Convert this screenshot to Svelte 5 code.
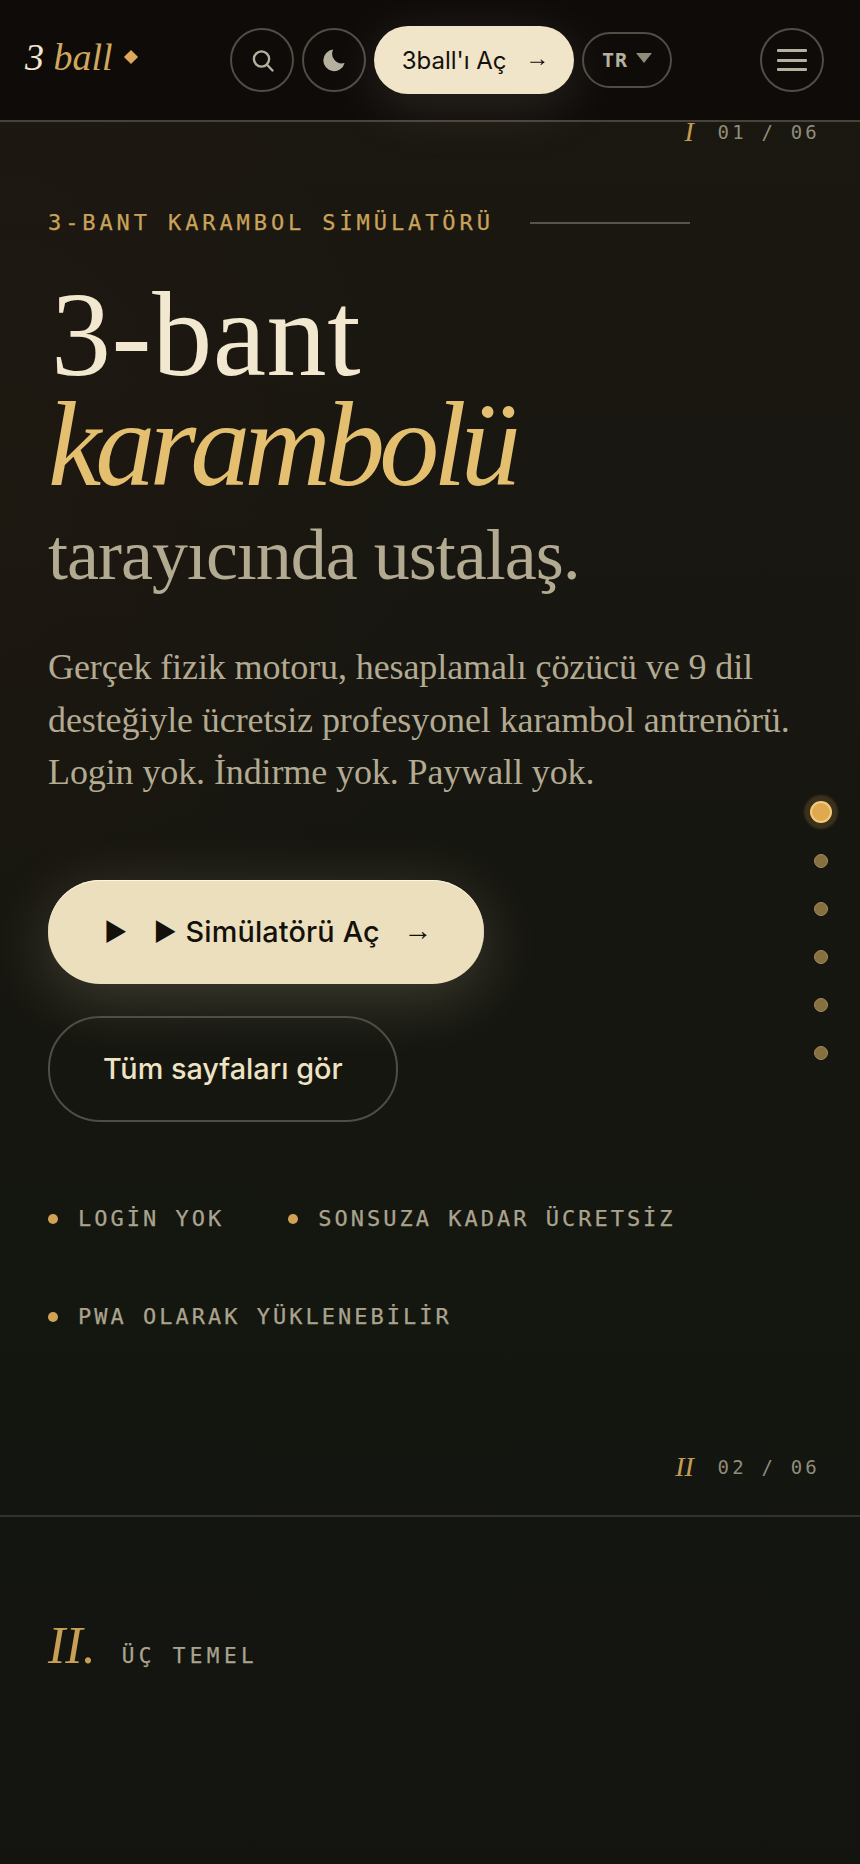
<script>
  const dots = [0, 1, 2, 3, 4, 5];
  const trust = ['LOGİN YOK', 'SONSUZA KADAR ÜCRETSİZ', 'PWA OLARAK YÜKLENEBİLİR'];
</script>

<div class="page">
  <header class="topbar">
    <a class="logo" href="#top"><span class="logo-num">3</span> ball<i class="diamond"></i></a>
    <div class="tools">
      <button class="round" aria-label="Ara">
        <svg width="24" height="24" viewBox="0 0 24 24" fill="none" stroke="currentColor" stroke-width="2.4">
          <circle cx="11.5" cy="11" r="7.6" />
          <path d="M16.8 16.5 22.5 22.5" stroke-linecap="round" />
        </svg>
      </button>
      <button class="round" aria-label="Tema">
        <svg width="24" height="24" viewBox="0 0 24 24" fill="currentColor">
          <path d="M11.2 1.6A10.8 10.8 0 1 0 22.6 15 9.6 9.6 0 0 1 11.2 1.6Z" />
        </svg>
      </button>
      <a class="open" href="#open">3ball'ı Aç <span class="arrow">→</span></a>
      <button class="lang">TR
        <svg width="16" height="10" viewBox="0 0 16 10" fill="currentColor"><path d="M0 0h16L8 10Z" /></svg>
      </button>
    </div>
    <button class="round menu" aria-label="Menü">
      <span></span><span></span><span></span>
    </button>
  </header>

  <nav class="rail">
    {#each dots as d}
      <span class="dot" class:active={d === 0}></span>
    {/each}
  </nav>

  <section class="hero">
    <div class="mark top"><em>I</em> 01 / 06</div>
    <div class="eyebrow"><span>3-BANT KARAMBOL SİMÜLATÖRÜ</span><i></i></div>
    <h1>
      <span class="l1">3-bant</span>
      <span class="l2">karambolü</span>
      <span class="l3">tarayıcında ustalaş.</span>
    </h1>
    <p class="lead">Gerçek fizik motoru, hesaplamalı çözücü ve 9 dil desteğiyle ücretsiz profesyonel karambol antrenörü. Login yok. İndirme yok. Paywall yok.</p>
    <div class="actions">
      <a class="btn primary" href="#sim"><span class="tri">▶</span><span class="tri">▶</span> Simülatörü Aç <span class="arrow">→</span></a>
      <a class="btn ghost" href="#all">Tüm sayfaları gör</a>
    </div>
    <ul class="trust">
      {#each trust as item}
        <li>{item}</li>
      {/each}
    </ul>
    <div class="mark"><em>II</em> 02 / 06</div>
  </section>

  <section class="next">
    <span class="num">II.</span>
    <span class="kicker">ÜÇ TEMEL</span>
  </section>
</div>

<style>
  :global(body) {
    background: #14150f;
  }

  .page {
    position: relative;
    width: 860px;
    height: 1864px;
    overflow: hidden;
    color: #efe3c4;
    font-family: Inter, sans-serif;
    background:
      radial-gradient(420px 620px at 0 520px, rgba(56, 30, 14, 0.14), transparent 100%),
      linear-gradient(180deg, #1b1711 0, #1a1711 320px, #161610 900px, #141610 1300px, #131410 1864px);
  }

  a {
    text-decoration: none;
  }

  button {
    background: none;
    font: inherit;
    cursor: pointer;
  }

  .arrow {
    font-family: "Liberation Sans", sans-serif;
    font-weight: 400;
    margin-bottom: 4px;
  }

  .topbar {
    height: 120px;
    display: flex;
    align-items: center;
    padding: 0 36px 0 25px;
    background: #0f0b09;
    border-bottom: 2px solid #46443a;
    box-sizing: content-box;
  }

  .logo {
    width: 205px;
    font: italic 38px "Liberation Serif", serif;
    color: #d0a85e;
    display: flex;
    align-items: center;
    white-space: pre;
    margin-top: -6px;
  }

  .logo-num {
    color: #f2e8cf;
  }

  .diamond {
    width: 10px;
    height: 10px;
    margin-left: 13px;
    background: #dca95a;
    transform: rotate(45deg);
  }

  .tools {
    display: flex;
    align-items: center;
    gap: 8px;
    flex: 1;
  }

  .round {
    width: 64px;
    height: 64px;
    border-radius: 50%;
    border: 2px solid #4f4d44;
    color: #b6b09e;
    display: flex;
    align-items: center;
    justify-content: center;
    padding: 0;
    flex: none;
  }

  .menu {
    flex-direction: column;
    gap: 6.5px;
  }

  .menu span {
    width: 30px;
    height: 3px;
    background: #b6b09e;
    border-radius: 1px;
  }

  .open {
    width: 200px;
    height: 68px;
    padding-left: 3px;
    box-sizing: border-box;
    border-radius: 34px;
    background: #f0e5c8;
    color: #14100c;
    font-size: 24px;
    display: flex;
    align-items: center;
    justify-content: center;
    gap: 4px;
    white-space: pre;
    box-shadow: 0 12px 56px rgba(240, 229, 200, 0.13);
  }

  .open .arrow {
    margin-left: 8px;
  }

  .lang {
    width: 90px;
    height: 56px;
    border-radius: 28px;
    border: 2px solid #4f4d44;
    color: #b6b09e;
    font-family: "DejaVu Sans Mono", monospace;
    font-size: 20px;
    font-weight: 700;
    letter-spacing: 1px;
    display: flex;
    align-items: center;
    justify-content: center;
    gap: 8px;
    padding: 0;
  }

  .lang svg {
    color: #8f8d79;
    margin-top: -5px;
  }

  .rail {
    position: absolute;
    right: 27px;
    top: 801px;
    width: 24px;
    display: flex;
    flex-direction: column;
    align-items: center;
    gap: 34px;
  }

  .dot {
    width: 14px;
    height: 14px;
    border-radius: 50%;
    background: #86703f;
    border: 1px solid #a68c55;
    box-sizing: border-box;
  }

  .active {
    width: 22px;
    height: 22px;
    margin-bottom: -3px;
    background: #dfa950;
    border: 2px solid #f2cb7c;
    box-shadow: 0 0 2px 6px rgba(223, 169, 80, 0.18);
  }

  .hero {
    padding: 0 48px;
    height: 1393px;
    position: relative;
    border-bottom: 2px solid #33332c;
  }

  .mark {
    display: flex;
    justify-content: flex-end;
    align-items: center;
    gap: 9px;
    position: absolute;
    right: 40px;
    bottom: 32px;
    font: 19px "DejaVu Sans Mono", monospace;
    letter-spacing: 3.2px;
    color: #908c79;
    white-space: pre;
  }

  .mark.top {
    top: -6px;
    bottom: auto;
  }

  .mark em {
    font: italic 28px "Liberation Serif", serif;
    letter-spacing: 0;
    color: #c69c52;
  }

  .eyebrow {
    padding-top: 88px;
    display: flex;
    align-items: center;
    gap: 36px;
    font: 22px "DejaVu Sans Mono", monospace;
    letter-spacing: 3.9px;
    color: #c9a35a;
    -webkit-text-stroke: 0.25px currentColor;
  }

  .eyebrow i {
    width: 160px;
    height: 2px;
    background: #57554a;
  }

  h1 {
    margin: 45px 0 0;
    font-family: "Liberation Serif", serif;
    font-weight: 400;
    display: flex;
    flex-direction: column;
  }

  .l1 {
    font-size: 120px;
    line-height: 110px;
    color: #f2e8cf;
    letter-spacing: 0.6px;
    margin-left: 3px;
  }

  .l2 {
    font-size: 120px;
    line-height: 110px;
    font-style: italic;
    color: #e5bf70;
    letter-spacing: -5.9px;
  }

  .l3 {
    font-size: 72px;
    line-height: 110px;
    color: #b3aa92;
    letter-spacing: -1px;
    white-space: nowrap;
  }

  .lead {
    margin: 31px 0 0;
    font: 36px/52.5px "Liberation Serif", serif;
    letter-spacing: -0.1px;
    color: #b3aa92;
    width: 770px;
  }

  .actions {
    margin-top: 81px;
    display: flex;
    flex-direction: column;
    align-items: flex-start;
    gap: 32px;
  }

  .btn {
    height: 104px;
    border-radius: 52px;
    display: flex;
    align-items: center;
    font-size: 28.8px;
    white-space: pre;
    box-sizing: border-box;
  }

  .primary {
    width: 436px;
    padding-left: 56px;
    background: #ebdfbe;
    color: #14100c;
    font-weight: 500;
    letter-spacing: 0.15px;
    box-shadow: 0 14px 64px rgba(235, 223, 190, 0.2), inset 0 1px 0 #fbf4df;
  }

  .tri {
    margin-right: 26px;
    font-size: 25px;
  }

  .tri + .tri {
    margin-right: 1px;
  }

  .primary .arrow {
    margin-left: 16px;
    margin-bottom: 2px;
  }

  .ghost {
    height: 106px;
    width: 350px;
    padding-left: 53px;
    border: 2px solid #4f4d44;
    color: #efe3c4;
    font-weight: 500;
  }

  .trust {
    list-style: none;
    margin: 84px 0 0;
    padding: 0;
    display: flex;
    flex-wrap: wrap;
    gap: 72px 64px;
    font: 22px/26px "DejaVu Sans Mono", monospace;
    letter-spacing: 3px;
    color: #aaa48e;
    -webkit-text-stroke: 0.25px currentColor;
  }

  .trust li {
    display: flex;
    align-items: center;
    gap: 20px;
  }

  .trust li::before {
    content: "";
    width: 10px;
    height: 10px;
    border-radius: 50%;
    background: #d2a254;
  }

  .next {
    padding: 99px 48px 0;
    display: flex;
    align-items: baseline;
    gap: 26px;
  }

  .num {
    font: italic 52px "Liberation Serif", serif;
    color: #c99f56;
  }

  .kicker {
    font: 21px "DejaVu Sans Mono", monospace;
    letter-spacing: 4.4px;
    color: #aaa48e;
    -webkit-text-stroke: 0.25px currentColor;
  }
</style>
